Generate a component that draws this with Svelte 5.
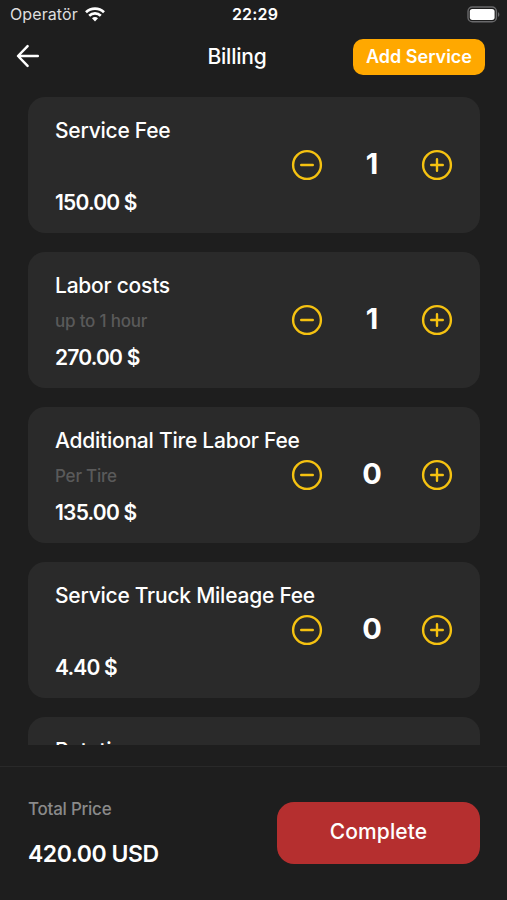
<script lang="ts">
  interface Service {
    id: number;
    name: string;
    note: string;
    price: number;
    count: number;
  }

  let services = $state<Service[]>([
    { id: 1, name: 'Service Fee', note: '', price: 150, count: 1 },
    { id: 2, name: 'Labor costs', note: 'up to 1 hour', price: 270, count: 1 },
    { id: 3, name: 'Additional Tire Labor Fee', note: 'Per Tire', price: 135, count: 0 },
    { id: 4, name: 'Service Truck Mileage Fee', note: '', price: 4.4, count: 0 },
    { id: 5, name: 'Rotation', note: '', price: 40, count: 0 },
  ]);

  let total = $derived(services.reduce((sum, s) => sum + s.price * s.count, 0));

  function change(service: Service, step: number) {
    service.count = Math.max(0, service.count + step);
  }
</script>

<div class="screen">
  <div class="status-bar">
    <div class="carrier">
      <span>Operatör</span>
      <svg width="20" height="15" viewBox="0 0 20 15" fill="none" stroke="#fff" stroke-width="2.7">
        <path d="M1 5.2C6 .4 14 .4 19 5.2" />
        <path d="M4.2 8.7c3.3-3.1 8.3-3.1 11.6 0" />
        <path d="M10 14.4l-3-3.1c1.7-1.6 4.3-1.6 6 0z" fill="#fff" stroke="none" />
      </svg>
    </div>
    <span class="time">22:29</span>
    <div class="battery">
      <svg width="33" height="17" viewBox="0 0 33 17">
        <rect x="1" y="1" width="28.4" height="14.8" rx="4.4" fill="none" stroke="#69696b" stroke-width="1.4" />
        <rect x="2.8" y="2.9" width="24.8" height="11" rx="2.6" fill="#fff" />
        <path d="M31 6.2c1.8.7 1.8 3.9 0 4.6z" fill="#69696b" />
      </svg>
    </div>
  </div>

  <header>
    <button class="back" aria-label="Back">
      <svg width="24" height="24" viewBox="0 0 24 24" fill="none" stroke="#fff" stroke-width="2.5" stroke-linecap="round" stroke-linejoin="round">
        <path d="M21.8 12H2.2M11.6 2.2L2 12l9.6 9.8" />
      </svg>
    </button>
    <h1>Billing</h1>
    <button class="add">Add Service</button>
  </header>

  <div class="list">
    {#each services as service (service.id)}
      <div class="card">
        <div class="info">
          <span class="name">{service.name}</span>
          <span class="note">{service.note}</span>
          <span class="price">{service.price.toFixed(2)} $</span>
        </div>
        <div class="stepper">
          <button aria-label="Decrease" onclick={() => change(service, -1)}>
            <svg width="32" height="32" viewBox="0 0 32 32" fill="none" stroke="#f5c211" stroke-width="2.4" stroke-linecap="round">
              <circle cx="16" cy="16" r="13.9" />
              <path d="M10.2 16h11.6" />
            </svg>
          </button>
          <span class="count">{service.count}</span>
          <button aria-label="Increase" onclick={() => change(service, 1)}>
            <svg width="32" height="32" viewBox="0 0 32 32" fill="none" stroke="#f5c211" stroke-width="2.4" stroke-linecap="round">
              <circle cx="16" cy="16" r="13.9" />
              <path d="M10.2 16h11.6M16 10.2v11.6" />
            </svg>
          </button>
        </div>
      </div>
    {/each}
  </div>

  <footer>
    <div class="total">
      <span class="label">Total Price</span>
      <span class="amount">{total.toFixed(2)} USD</span>
    </div>
    <button class="complete">Complete</button>
  </footer>
</div>

<style>
  :global(body) {
    background: #1e1e1e;
  }

  .screen {
    display: flex;
    flex-direction: column;
    height: 900px;
    box-sizing: border-box;
    overflow: hidden;
    background: #1e1e1e;
    color: #fff;
    font-family: Inter, 'Liberation Sans', sans-serif;
  }

  button {
    padding: 0;
    border: none;
    background: none;
    color: inherit;
    font-family: inherit;
    cursor: pointer;
  }

  svg {
    display: block;
  }

  .status-bar,
  header {
    display: grid;
    align-items: center;
  }

  .status-bar {
    grid-template-columns: 1fr auto 1fr;
    height: 28px;
    padding: 0 7px 0 10px;
  }

  .carrier {
    display: flex;
    align-items: center;
    gap: 7px;
    color: #dedede;
    font-size: 16px;
    letter-spacing: 0.1px;
  }

  .time {
    font-size: 16px;
    font-weight: 600;
    letter-spacing: 0.2px;
  }

  .battery {
    justify-self: end;
  }

  header {
    grid-template-columns: 132px 1fr 132px;
    height: 58px;
    padding: 0 22px 0 16px;
  }

  .back {
    justify-self: start;
    margin-bottom: 3px;
  }

  h1 {
    margin: 0 7px 2px 0;
    font-size: 21px;
    font-weight: 500;
    letter-spacing: -0.2px;
    text-align: center;
    transform: translateX(-10px);
  }

  .add {
    height: 36px;
    padding-bottom: 1px;
    border-radius: 10px;
    background: #ffa800;
    font-size: 18px;
    font-weight: 600;
  }

  .list {
    display: flex;
    flex: 0 0 659px;
    flex-direction: column;
    gap: 19px;
    padding: 10.5px 27px 0 28px;
    box-sizing: border-box;
    overflow: hidden;
  }

  .card {
    display: flex;
    flex-shrink: 0;
    justify-content: space-between;
    height: 136px;
    padding: 0 27px;
    box-sizing: border-box;
    border-radius: 17px;
    background: #2a2a2a;
  }

  .info {
    display: flex;
    flex-direction: column;
    gap: 11px;
    width: 236px;
    padding-top: 21px;
    white-space: nowrap;
  }

  .name,
  .note,
  .price {
    height: 25px;
    line-height: 25px;
  }

  .name {
    font-size: 21px;
    font-weight: 500;
    letter-spacing: -0.24px;
  }

  .note {
    color: #5a5a5a;
    font-size: 17px;
    font-weight: 500;
    letter-spacing: -0.2px;
  }

  .price {
    font-size: 21px;
    font-weight: 600;
    letter-spacing: -0.8px;
  }

  .stepper {
    display: flex;
    align-items: center;
    justify-content: space-between;
    width: 162px;
  }

  .count {
    width: 30px;
    margin-bottom: 3px;
    font-size: 29px;
    font-weight: 700;
    text-align: center;
  }

  footer {
    display: flex;
    flex: 1;
    align-items: flex-start;
    justify-content: space-between;
    margin-top: 21px;
    padding: 35px 27px 0 28px;
    border-top: 1px solid #292929;
  }

  .total {
    display: flex;
    flex-direction: column;
    gap: 21px;
    white-space: nowrap;
  }

  .label {
    margin-top: -3px;
    color: #8a8a8a;
    font-size: 17px;
    line-height: 20px;
    font-weight: 500;
    letter-spacing: -0.25px;
  }

  .amount {
    font-size: 23px;
    line-height: 28px;
    font-weight: 600;
    letter-spacing: -0.5px;
  }

  .complete {
    width: 203px;
    height: 62px;
    padding-bottom: 3px;
    border-radius: 17px;
    background: #b52f2f;
    font-size: 21px;
    font-weight: 500;
    letter-spacing: 0.1px;
  }
</style>
